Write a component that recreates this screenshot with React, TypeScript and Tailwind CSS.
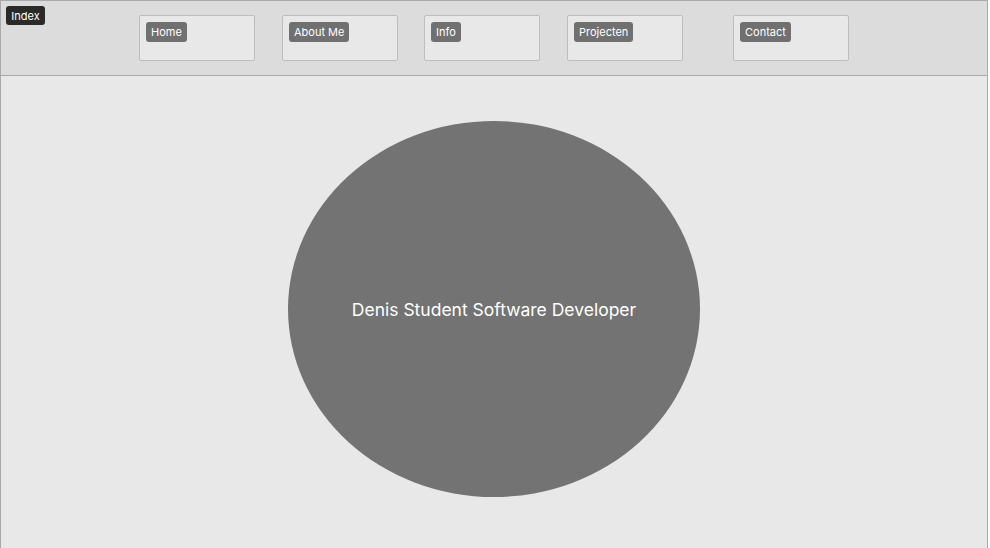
import React from "react";

const items = [
  { label: "Home", ml: "ml-[94px]" },
  { label: "About Me", ml: "ml-[27px]" },
  { label: "Info", ml: "ml-[26px]" },
  { label: "Projecten", ml: "ml-[27px]" },
  { label: "Contact", ml: "ml-[50px]" },
];

export default function App() {
  return (
    <div
      className="w-[988px] h-[560px] border border-[#a9a9a9] bg-[#e8e8e8] flex flex-col"
      style={{ fontFamily: "Inter, 'Noto Sans', sans-serif" }}
    >
      <header className="h-[75px] shrink-0 bg-[#dcdcdc] border-b border-[#a9a9a9] flex items-start pl-[5px] pt-[5px]">
        <div className="h-[19px] w-[39px] rounded-[3px] bg-[#2a2a2a] text-white text-[11px] leading-[20px] flex items-center justify-center">
          Index
        </div>
        {items.map((it) => (
          <div
            key={it.label}
            className={`${it.ml} mt-[9px] w-[116px] h-[46px] rounded-[2px] border border-[#bdbdbd] bg-[#e8e8e8] pl-[6px] pt-[6px] flex items-start`}
          >
            <div className="h-[20px] px-[5px] rounded-[3px] bg-[#707070] text-white text-[11px] leading-[21px]">
              {it.label}
            </div>
          </div>
        ))}
      </header>
      <main className="flex-1 flex flex-col items-center pt-[45px]">
        <div className="w-[412px] h-[376px] rounded-[50%] bg-[#737373] flex items-center justify-center pt-[2px] text-white text-[17.5px]">
          Denis Student Software Developer
        </div>
      </main>
    </div>
  );
}
